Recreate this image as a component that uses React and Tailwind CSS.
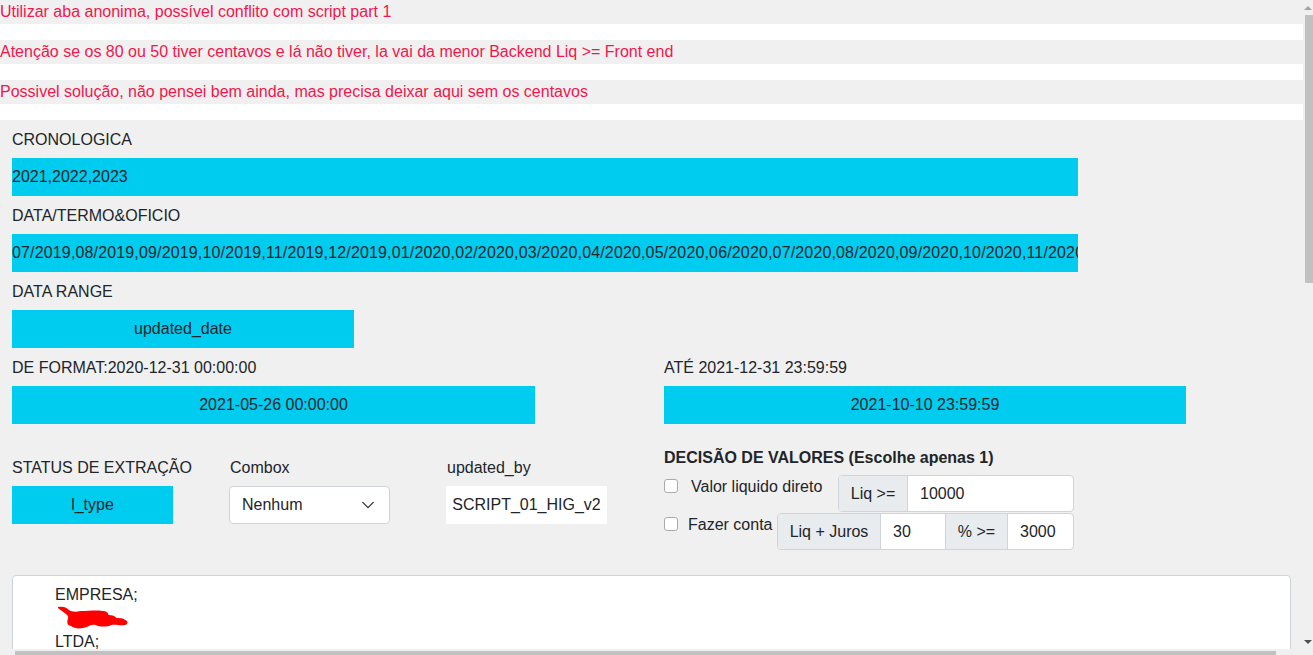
import React from "react";

const NOTES = [
  "Utilizar aba anonima, possível conflito com script part 1",
  "Atenção se os 80 ou 50 tiver centavos e lá não tiver, la vai da menor Backend Liq >= Front end",
  "Possivel solução, não pensei bem ainda, mas precisa deixar aqui sem os centavos",
];

const MONTHS =
  "07/2019,08/2019,09/2019,10/2019,11/2019,12/2019,01/2020,02/2020,03/2020,04/2020,05/2020,06/2020,07/2020,08/2020,09/2020,10/2020,11/2020,12/2020,01/2021,02/2021,03/2021";

function Label({ children, className = "" }) {
  return <p className={`h-[38px] pt-[1px] leading-[38px] text-[#212529] ${className}`}>{children}</p>;
}

function CyanBox({ children, className = "" }) {
  return (
    <div className={`h-[38px] overflow-hidden whitespace-nowrap bg-[#00ccf0] leading-[38px] text-[#212529] ${className}`}>
      {children}
    </div>
  );
}

function Check({ label, className = "" }) {
  return (
    <label className={`flex shrink-0 items-start text-[#212529] ${className}`}>
      <span className="mt-[4px] h-[14px] w-[14px] shrink-0 rounded-[3px] border border-[#aaa] bg-white" />
      {label}
    </label>
  );
}

export default function App() {
  return (
    <div
      className="flex h-[655px] w-full flex-col overflow-hidden bg-[#f0f0f0] text-[16px]"
      style={{ fontFamily: '"Liberation Sans", Arial, sans-serif' }}
    >
      <div className="flex min-h-0 flex-1">
        <div className="w-[1303px] overflow-hidden">
          <div className="flex w-[1303px] flex-col gap-4 bg-white pb-4">
            {NOTES.map((n) => (
              <p key={n} className="h-6 bg-[#f0f0f0] leading-6 text-[#f2164d]">
                {n}
              </p>
            ))}
          </div>

          <div className="px-3">
            <Label>CRONOLOGICA</Label>
            <CyanBox className="w-[1066px]">2021,2022,2023</CyanBox>
            <Label>DATA/TERMO&amp;OFICIO</Label>
            <CyanBox className="w-[1066px] tracking-[0.15px]">{MONTHS}</CyanBox>
            <Label>DATA RANGE</Label>
            <CyanBox className="w-[342px] text-center">updated_date</CyanBox>

            <div className="flex">
              <div className="w-[652px]">
                <Label>DE FORMAT:2020-12-31 00:00:00</Label>
                <CyanBox className="w-[523px] text-center">2021-05-26 00:00:00</CyanBox>
              </div>
              <div>
                <Label>ATÉ 2021-12-31 23:59:59</Label>
                <CyanBox className="w-[522px] text-center">2021-10-10 23:59:59</CyanBox>
              </div>
            </div>

            <div className="flex items-start">
              <div className="mt-[24px] flex w-[652px]">
                <div className="w-[217px]">
                  <Label className="whitespace-nowrap">STATUS DE EXTRAÇÃO</Label>
                  <CyanBox className="w-[161px] text-center">l_type</CyanBox>
                </div>
                <div className="w-[217px]">
                  <Label className="pl-[1px]">Combox</Label>
                  <div className="flex h-[38px] w-[161px] items-center justify-between rounded-[4px] border border-[#ced4da] bg-white pl-3 pr-[14px] text-[#212529]">
                    <span>Nenhum</span>
                    <svg width="14" height="14" viewBox="0 0 16 16" fill="none">
                      <path d="M2 5l6 6 6-6" stroke="#343a40" strokeWidth="1.6" strokeLinecap="round" strokeLinejoin="round" />
                    </svg>
                  </div>
                </div>
                <div>
                  <Label className="pl-[1px]">updated_by</Label>
                  <div className="h-[38px] w-[161px] bg-white text-center leading-[38px] text-[#212529]">
                    SCRIPT_01_HIG_v2
                  </div>
                </div>
              </div>

              <div className="mt-[21px]">
                <p className="h-[30px] pt-[1px] leading-6 font-bold text-[#212529]">DECISÃO DE VALORES (Escolhe apenas 1)</p>
                <div className="flex h-[37px] items-start">
                  <Check label="Valor liquido direto" className="w-[174px] gap-[13px] leading-6" />
                  <div className="flex h-[37px] w-[236px] overflow-hidden rounded-[4px] border border-[#ced4da] bg-white text-[#212529]">
                    <span className="flex w-[69px] items-center justify-center border-r border-[#ced4da] bg-[#e9ecef]">Liq &gt;=</span>
                    <span className="flex items-center pl-3">10000</span>
                  </div>
                </div>
                <div className="mt-[1px] flex h-[37px] items-start">
                  <Check label="Fazer conta" className="w-[113px] gap-[10px] leading-6" />
                  <div className="flex h-[37px] w-[297px] overflow-hidden rounded-[4px] border border-[#ced4da] bg-white text-[#212529]">
                    <span className="flex w-[103px] items-center justify-center border-r border-[#ced4da] bg-[#e9ecef]">Liq + Juros</span>
                    <span className="flex w-[65px] items-center border-r border-[#ced4da] pl-3">30</span>
                    <span className="flex w-[62px] items-center justify-center border-r border-[#ced4da] bg-[#e9ecef]">% &gt;=</span>
                    <span className="flex items-center pl-3">3000</span>
                  </div>
                </div>
              </div>
            </div>

            <div className="mt-[25px] h-[900px] w-[1279px] rounded-[4px] border border-[#ced4da] bg-white pl-[42px] pt-[7px] text-[#212529]">
              <p className="leading-6">EMPRESA;</p>
              <div className="h-6">
                <svg width="94" height="28" viewBox="0 0 95 28" preserveAspectRatio="none" className="-mt-[1px]">
                  <path
                    d="M3 1c4-1 9 0 11 3 3 2 7 2 12 1 8 0 16-1 22 0 4 0 6 2 6 4 4 0 7 1 8 3 3 0 7 0 9 2 3 1 3 4 0 5-5 1-10-1-14 0-4 2-12 2-16 0-4-1-6 1-9 2-5 2-12 2-16-1-4-1-4-4-3-7 1-2 0-4-2-5-2-2-6-4-8-6 0-1 0-1 0-1z"
                    fill="#ff0000"
                  />
                </svg>
              </div>
              <p className="leading-6">LTDA;</p>
            </div>
          </div>
        </div>

        {/* barra de rolagem vertical */}
        <div className="flex w-[10px] flex-col bg-[#f0f0f0]">
          <div className="flex h-[15px] items-center justify-end pr-[1px]">
            <span className="h-0 w-0 border-x-[4px] border-b-[4px] border-x-transparent border-b-[#a3a3a3]" />
          </div>
          <div className="ml-[2px] h-[268px] bg-[#c1c1c1]" />
          <div className="flex-1" />
          <div className="flex h-[15px] items-center justify-end pr-[1px]">
            <span className="h-0 w-0 border-x-[4px] border-t-[4px] border-x-transparent border-t-[#505050]" />
          </div>
        </div>
      </div>

      {/* barra de rolagem horizontal */}
      <div className="flex h-[6px] bg-[#f0f0f0]">
        <div className="w-[15px]" />
        <div className="mt-[2px] w-[1261px] bg-[#c1c1c1]" />
      </div>
    </div>
  );
}
